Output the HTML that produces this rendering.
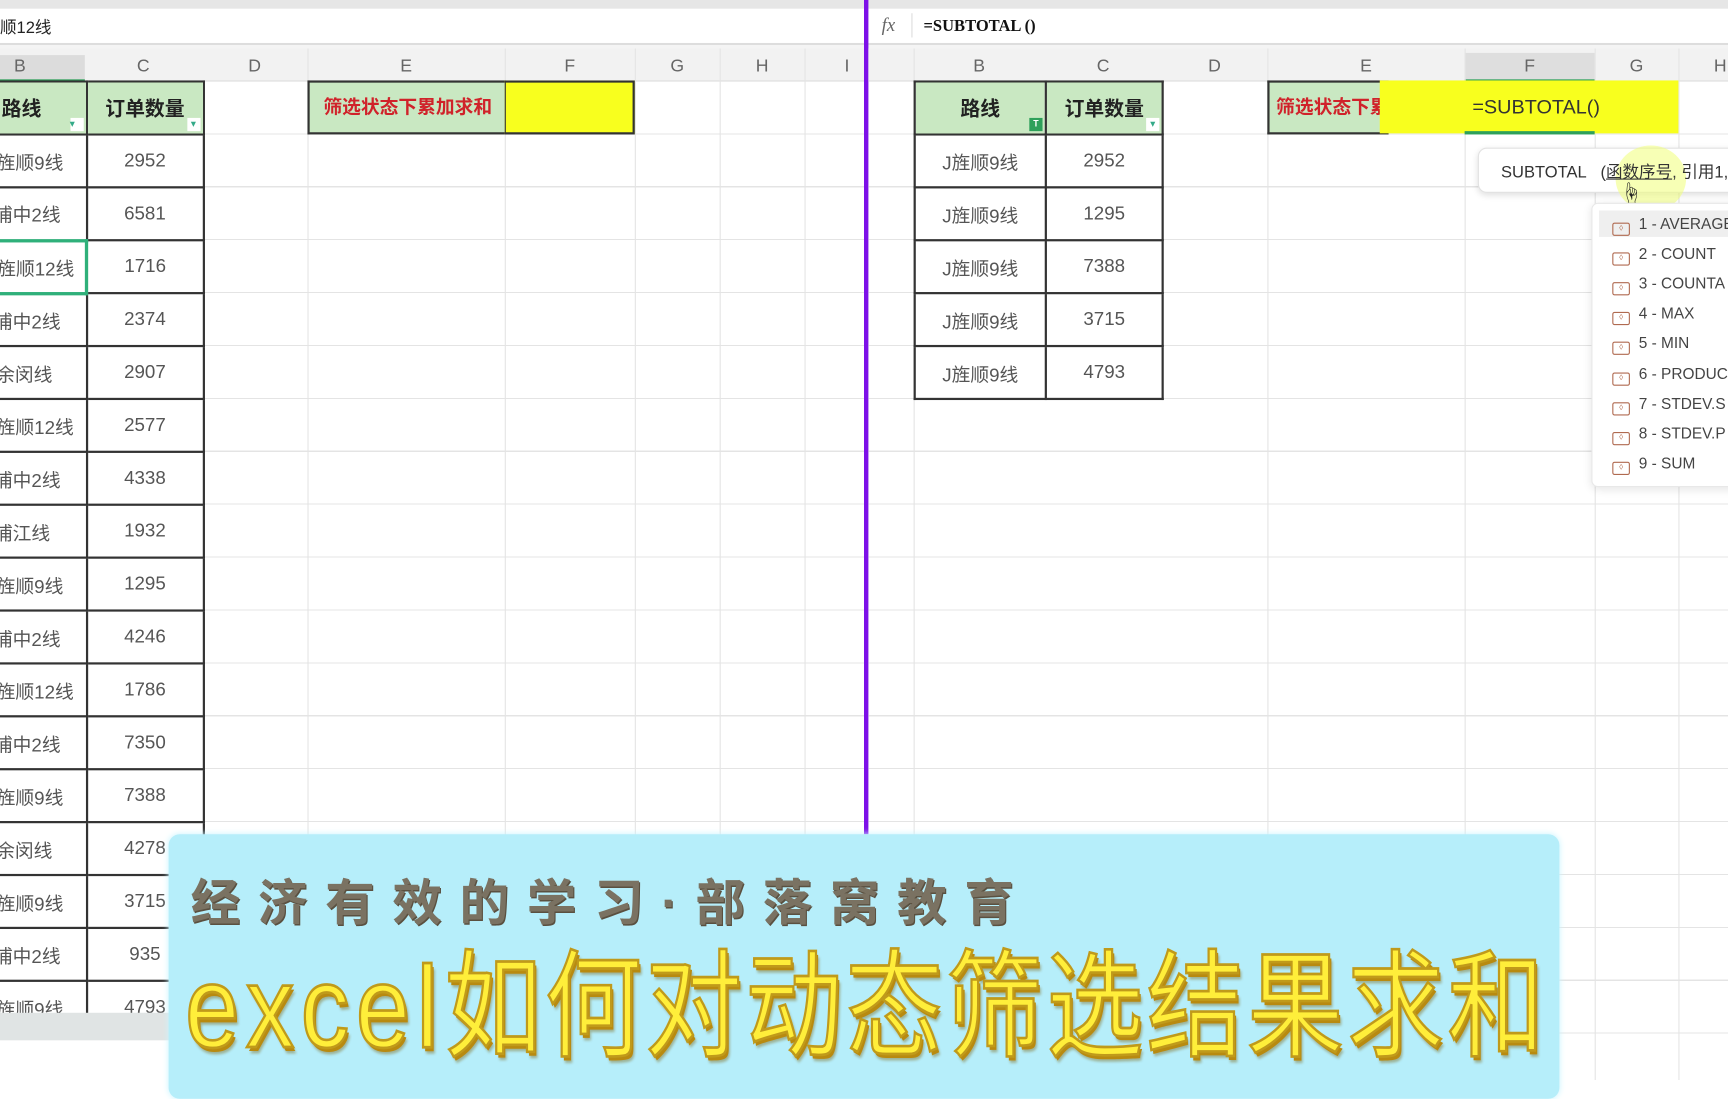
<!DOCTYPE html>
<html><head><meta charset="utf-8">
<style>
*{margin:0;padding:0;box-sizing:border-box}
html,body{width:1728px;height:1080px;overflow:hidden;background:#fff}
#w{position:absolute;left:0;top:0;width:1568px;height:980px;transform:scale(1.10204);transform-origin:0 0;font-family:"Liberation Sans","Noto Sans CJK SC",sans-serif;color:#333}
.a{position:absolute}
.grid{position:absolute;top:74px;height:906px;background:repeating-linear-gradient(to bottom,transparent 0,transparent 47px,#e4e4e4 47px,#e4e4e4 48px)}
.vl{position:absolute;top:44px;width:1px;height:936px;background:#e4e4e4}
.hdr{position:absolute;top:44px;height:30px;background:#f2f2f2;border-bottom:1px solid #ddd}
.hc{position:absolute;top:44px;height:30px;line-height:34px;text-align:center;font-size:16px;color:#666}
table{position:absolute;border-collapse:collapse}
td{border:2px solid #333;height:48px;font-size:17px;color:#555;text-align:center;padding:0}
td.h{background:#c9e8c2;font-weight:bold;color:#222;font-size:18px;position:relative}
.flt{position:absolute;right:2px;bottom:2px;width:12px;height:12px;background:#fff;font-size:8px;line-height:12px;color:#3a8}
.item{position:absolute;left:18px;font-size:14px;color:#444;height:22px;line-height:22px}
.ic{display:inline-block;width:16px;height:12px;border:1.5px solid #b06a50;border-radius:2px;margin-right:8px;vertical-align:-1px;font-size:7px;line-height:9px;text-align:center;color:#b06a50}
</style></head><body><div id="w">
<div class="a" style="left:0;top:0;width:1568px;height:8px;background:#e6e6e6"></div>
<div class="a" style="left:0;top:8px;width:1568px;height:33px;background:#fff;border-bottom:2px solid #ddd"></div>
<div class="a" style="left:0;top:41px;width:1568px;height:3px;background:#f4f4f4"></div>
<div class="a" style="left:0;top:14px;font-size:15px;color:#222">顺12线</div>
<div class="a" style="left:800px;top:13px;font-size:17px;font-style:italic;font-family:'Liberation Serif',serif;color:#666">fx</div>
<div class="a" style="left:827px;top:12px;width:1px;height:22px;background:#ddd"></div>
<div class="a" style="left:838px;top:16px;font-size:15px;font-weight:bold;font-family:'Liberation Serif',serif;color:#111">=SUBTOTAL ()</div>

<div class="hdr" style="left:0;width:785px"></div>
<div class="a" style="left:0;top:50px;width:77px;height:24px;background:#dcdcdc"></div>
<div class="a" style="left:0;top:72px;width:77px;height:2px;background:#2ea05a"></div>
<div class="grid" style="left:0;width:785px"></div>
<div class="vl" style="left:279px"></div><div class="vl" style="left:458px"></div><div class="vl" style="left:576px"></div><div class="vl" style="left:653px"></div><div class="vl" style="left:730px"></div>
<div class="hc" style="left:0;width:36px">B</div>
<div class="hc" style="left:77px;width:106px">C</div>
<div class="hc" style="left:183px;width:96px">D</div>
<div class="hc" style="left:279px;width:179px">E</div>
<div class="hc" style="left:458px;width:118px">F</div>
<div class="hc" style="left:576px;width:77px">G</div>
<div class="hc" style="left:653px;width:77px">H</div>
<div class="hc" style="left:730px;width:77px">I</div>
<table style="left:-44px;top:73px">
<tr><td class="h" style="width:121px;text-align:left;padding-left:43px">路线<span class="flt">▾</span></td><td class="h" style="width:106px">订单数量<span class="flt">▾</span></td></tr>
<tr><td style="text-align:left;padding-left:30px">J旌顺9线</td><td>2952</td></tr>
<tr><td style="text-align:left;padding-left:36px">浦中2线</td><td>6581</td></tr>
<tr><td style="text-align:left;padding-left:30px;border:3px solid #2fb07a">J旌顺12线</td><td>1716</td></tr>
<tr><td style="text-align:left;padding-left:36px">浦中2线</td><td>2374</td></tr>
<tr><td style="text-align:left;padding-left:38px">余闵线</td><td>2907</td></tr>
<tr><td style="text-align:left;padding-left:30px">J旌顺12线</td><td>2577</td></tr>
<tr><td style="text-align:left;padding-left:36px">浦中2线</td><td>4338</td></tr>
<tr><td style="text-align:left;padding-left:36px">浦江线</td><td>1932</td></tr>
<tr><td style="text-align:left;padding-left:30px">J旌顺9线</td><td>1295</td></tr>
<tr><td style="text-align:left;padding-left:36px">浦中2线</td><td>4246</td></tr>
<tr><td style="text-align:left;padding-left:30px">J旌顺12线</td><td>1786</td></tr>
<tr><td style="text-align:left;padding-left:36px">浦中2线</td><td>7350</td></tr>
<tr><td style="text-align:left;padding-left:30px">J旌顺9线</td><td>7388</td></tr>
<tr><td style="text-align:left;padding-left:38px">余闵线</td><td>4278</td></tr>
<tr><td style="text-align:left;padding-left:30px">J旌顺9线</td><td>3715</td></tr>
<tr><td style="text-align:left;padding-left:36px">浦中2线</td><td>935</td></tr>
<tr><td style="text-align:left;padding-left:30px">J旌顺9线</td><td>4793</td></tr>
</table>
<div class="a" style="left:279px;top:73px;width:180px;height:49px;background:#c9e8c2;border:2px solid #333;border-right:none;color:#d0222a;font-weight:bold;font-size:17px;line-height:45px;text-align:center">筛选状态下累加求和</div>
<div class="a" style="left:458px;top:73px;width:118px;height:49px;background:#f8ff1e;border:2px solid #333;border-left:1px solid #333"></div>
<div class="a" style="left:0;top:919px;width:785px;height:25px;background:#e0e4e4"></div>

<div class="a" style="left:784px;top:0;width:4px;height:757px;background:#7d10e8"></div>

<div class="hdr" style="left:788px;width:780px"></div>
<div class="a" style="left:1329px;top:48px;width:118px;height:26px;background:#dedede;border-bottom:2px solid #2ea05a"></div>
<div class="grid" style="left:788px;width:780px"></div>
<div class="vl" style="left:829px"></div><div class="vl" style="left:1150px"></div><div class="vl" style="left:1329px"></div><div class="vl" style="left:1447px"></div><div class="vl" style="left:1523px"></div>
<div class="hc" style="left:829px;width:119px">B</div>
<div class="hc" style="left:948px;width:106px">C</div>
<div class="hc" style="left:1054px;width:96px">D</div>
<div class="hc" style="left:1150px;width:179px">E</div>
<div class="hc" style="left:1329px;width:118px">F</div>
<div class="hc" style="left:1447px;width:76px">G</div>
<div class="hc" style="left:1523px;width:76px">H</div>
<table style="left:829px;top:73px">
<tr><td class="h" style="width:119px">路线<span class="flt" style="background:#2ea05a;color:#fff">T</span></td><td class="h" style="width:106px">订单数量<span class="flt">▾</span></td></tr>
<tr><td>J旌顺9线</td><td>2952</td></tr>
<tr><td>J旌顺9线</td><td>1295</td></tr>
<tr><td>J旌顺9线</td><td>7388</td></tr>
<tr><td>J旌顺9线</td><td>3715</td></tr>
<tr><td>J旌顺9线</td><td>4793</td></tr>
</table>
<div class="a" style="left:1150px;top:73px;width:110px;height:49px;background:#c9e8c2;border:2px solid #333;border-right:none;color:#d0222a;font-weight:bold;font-size:17px;line-height:45px;padding-left:6px;white-space:nowrap;overflow:hidden">筛选状态下累</div>
<div class="a" style="left:1252px;top:73px;width:271px;height:48px;background:#f8ff1e"></div>
<div class="a" style="left:1329px;top:119px;width:118px;height:3px;background:#2ea05a"></div>
<div class="a" style="left:1336px;top:87px;font-size:18px;color:#333">=SUBTOTAL()</div>
<div class="a" style="left:1341px;top:134px;width:240px;height:41px;background:#fff;border:1px solid #e2e2e2;border-radius:8px;box-shadow:0 2px 6px rgba(0,0,0,.12)"></div>
<div class="a" style="left:1466px;top:132px;width:64px;height:60px;border-radius:50%;background:rgba(240,255,120,.55)"></div>
<div class="a" style="left:1362px;top:145px;font-size:15px;color:#333;white-space:nowrap">SUBTOTAL&nbsp;&nbsp;&nbsp;(<span style="text-decoration:underline">函数序号</span>, 引用1, ..</div>
<div class="a" style="left:1470px;top:160px;font-size:20px;color:#222">☝</div>
<div class="a" style="left:1444px;top:184px;width:140px;height:258px;background:#fff;border:1px solid #e8e8e8;border-radius:6px;box-shadow:0 2px 8px rgba(0,0,0,.1)">
<div class="a" style="left:6px;top:6px;width:130px;height:24px;background:#efefef"></div>
<div class="item" style="top:7px"><span class="ic">◊</span>1 - AVERAGE</div>
<div class="item" style="top:34px"><span class="ic">◊</span>2 - COUNT</div>
<div class="item" style="top:61px"><span class="ic">◊</span>3 - COUNTA</div>
<div class="item" style="top:88px"><span class="ic">◊</span>4 - MAX</div>
<div class="item" style="top:115px"><span class="ic">◊</span>5 - MIN</div>
<div class="item" style="top:143px"><span class="ic">◊</span>6 - PRODUCT</div>
<div class="item" style="top:170px"><span class="ic">◊</span>7 - STDEV.S</div>
<div class="item" style="top:197px"><span class="ic">◊</span>8 - STDEV.P</div>
<div class="item" style="top:224px"><span class="ic">◊</span>9 - SUM</div>
</div>

<div class="a" style="left:153px;top:757px;width:1262px;height:240px;background:#b6eefa;border-radius:10px;box-shadow:0 0 6px #c8f4ff"></div>
<div class="a" style="left:173px;top:783px;font-size:45px;letter-spacing:16px;color:#7a7262;font-weight:bold;white-space:nowrap;text-shadow:1px 1px 0 #5a5040">经济有效的学习·部落窝教育</div>
<div class="a" style="left:168px;top:848px;font-size:88px;line-height:110px;white-space:nowrap;color:#ffee3a;-webkit-text-stroke:2px #c09a1a;text-shadow:2px 3px 0 #b88a10,3px 5px 2px rgba(120,90,0,.4);transform:scaleY(1.2);transform-origin:0 0;letter-spacing:3px"><span style="letter-spacing:6px">excel</span>如何对动态筛选结果求和</div>
</div></body></html>
